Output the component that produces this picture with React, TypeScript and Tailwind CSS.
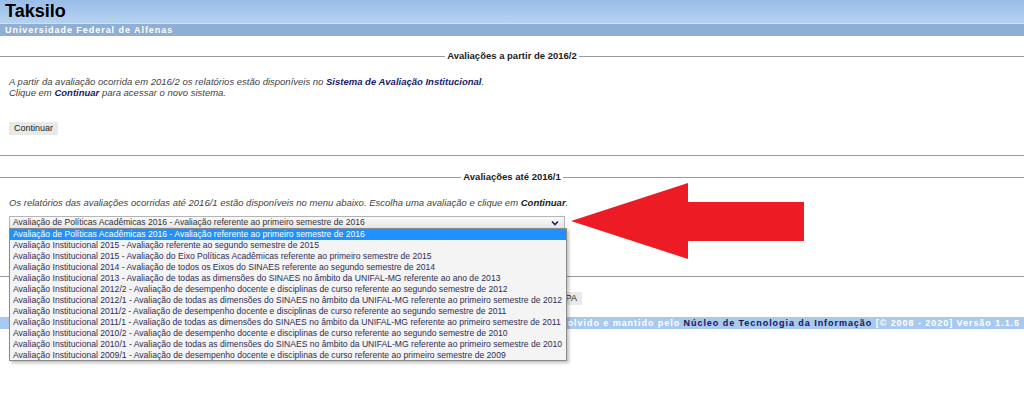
import React from 'react';

const options = [
  'Avaliação de Políticas Acadêmicas 2016 - Avaliação referente ao primeiro semestre de 2016',
  'Avaliação Institucional 2015 - Avaliação referente ao segundo semestre de 2015',
  'Avaliação Institucional 2015 - Avaliação do Eixo Políticas Acadêmicas referente ao primeiro semestre de 2015',
  'Avaliação Institucional 2014 - Avaliação de todos os Eixos do SINAES referente ao segundo semestre de 2014',
  'Avaliação Institucional 2013 - Avaliação de todas as dimensões do SINAES no âmbito da UNIFAL-MG referente ao ano de 2013',
  'Avaliação Institucional 2012/2 - Avaliação de desempenho docente e disciplinas de curso referente ao segundo semestre de 2012',
  'Avaliação Institucional 2012/1 - Avaliação de todas as dimensões do SINAES no âmbito da UNIFAL-MG referente ao primeiro semestre de 2012',
  'Avaliação Institucional 2011/2 - Avaliação de desempenho docente e disciplinas de curso referente ao segundo semestre de 2011',
  'Avaliação Institucional 2011/1 - Avaliação de todas as dimensões do SINAES no âmbito da UNIFAL-MG referente ao primeiro semestre de 2011',
  'Avaliação Institucional 2010/2 - Avaliação de desempenho docente e disciplinas de curso referente ao segundo semestre de 2010',
  'Avaliação Institucional 2010/1 - Avaliação de todas as dimensões do SINAES no âmbito da UNIFAL-MG referente ao primeiro semestre de 2010',
  'Avaliação Institucional 2009/1 - Avaliação de desempenho docente e disciplinas de curso referente ao primeiro semestre de 2009',
];

function Legend({ title }: { title: string }) {
  return (
    <div className="flex items-center h-[12px]">
      <div className="flex-1 h-px bg-[#9a9a9a]" />
      <span className="px-[2px] text-[9.5px] font-bold leading-[12px] text-[#222]">{title}</span>
      <div className="flex-1 h-px bg-[#9a9a9a]" />
    </div>
  );
}

function GrayButton({ children }: { children: React.ReactNode }) {
  return (
    <button className="h-[13px] px-[5px] bg-[#e9e9e9] text-[9px] leading-[13px] text-[#222] rounded-[1px]">
      {children}
    </button>
  );
}

export default function App() {
  return (
    <div className="relative w-[1024px] h-[396px] overflow-hidden bg-white font-['Liberation_Sans',Arial,sans-serif]">
      {/* Header */}
      <div className="h-[23px] px-[5px] bg-gradient-to-b from-[#99bde8] to-[#b6d2f1] text-[18px] font-bold leading-[23px] text-black">
        Taksilo
      </div>
      <div className="h-px bg-[#cfe0f4]" />
      <div className="h-[12px] px-[5px] bg-[#8eaed6] text-[9px] font-bold leading-[12px] tracking-[0.95px] text-white">
        Universidade Federal de Alfenas
      </div>

      {/* Section 1 */}
      <div className="mt-[14px] flex flex-col">
        <Legend title="Avaliações a partir de 2016/2" />
        <div className="px-[9px] pt-[14px] text-[9.5px] italic leading-[11px] text-[#444]">
          <p>
            A partir da avaliação ocorrida em 2016/2 os relatórios estão disponíveis no{' '}
            <b className="text-[#1b1b6b]">Sistema de Avaliação Institucional</b>.
          </p>
          <p>
            Clique em <b className="text-[#1b1b6b]">Continuar</b> para acessar o novo sistema.
          </p>
        </div>
        <div className="flex px-[9px] pt-[24px]">
          <GrayButton>Continuar</GrayButton>
        </div>
        <div className="mt-[20px] h-px bg-[#9a9a9a]" />
      </div>

      {/* Section 2 */}
      <div className="mt-[15px] flex flex-col">
        <Legend title="Avaliações até 2016/1" />
        <div className="px-[9px] pt-[14px] text-[9.5px] italic leading-[11px] text-[#444]">
          <p>
            Os relatórios das avaliações ocorridas até 2016/1 estão disponíveis no menu abaixo. Escolha uma avaliação e clique em{' '}
            <b className="text-[#222]">Continuar</b>.
          </p>
        </div>
        <div className="flex px-[9px] pt-[8px]">
          <div className="flex items-center justify-between w-[556px] h-[13px] px-[3px] border border-[#b5b5b5] bg-gradient-to-b from-[#fafafa] to-[#e6e6e6] text-[8.6px] text-[#333]">
            <span>{options[0]}</span>
            <svg width="8" height="6" viewBox="0 0 8 6" className="mr-[2px]">
              <path d="M1 1.5 L4 4.5 L7 1.5" fill="none" stroke="#1b1b6b" strokeWidth="1.6" />
            </svg>
          </div>
        </div>
        <div className="flex px-[9px] pt-[10px]">
          <GrayButton>Continuar</GrayButton>
        </div>
        <div className="mt-[24px] h-px bg-[#9a9a9a]" />
      </div>

      <div className="flex justify-center pt-[15px] pl-[14px]">
        <GrayButton>Relatórios anteriores da CPA</GrayButton>
      </div>

      {/* Footer */}
      <div className="mt-[12px] h-[12px] bg-[#a9c9ee] pr-[4px] text-right text-[9px] font-bold leading-[12px] tracking-[0.95px] text-white">
        Desenvolvido e mantido pelo <span className="text-[#15155a]">Núcleo de Tecnologia da Informação</span> [© 2008 - 2020] Versão 1.1.5
      </div>

      {/* Open dropdown list */}
      <div className="absolute left-[9px] top-[228px] w-[558px] h-[133px] border border-[#8a8a8a] bg-[#f4f4f4] shadow-[2px_2px_3px_rgba(0,0,0,0.25)] text-[8.6px] text-[#2d2d55]">
        {options.map((o, i) => (
          <div
            key={o}
            className={`h-[11px] px-[3px] leading-[11px] whitespace-nowrap ${i === 0 ? 'bg-[#1e90ff] text-white' : ''}`}
          >
            {o}
          </div>
        ))}
      </div>

      {/* Red arrow */}
      <svg className="absolute left-0 top-0" width="1024" height="396">
        <polygon points="571,221 688,183 688,202 804,202 804,241 688,241 688,259" fill="#ed1c24" />
      </svg>
    </div>
  );
}
